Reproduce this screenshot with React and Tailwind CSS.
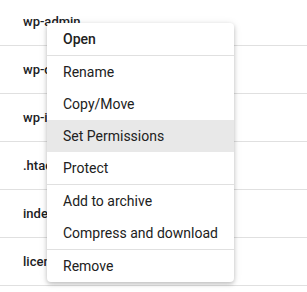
import * as React from "react";

const files = ["wp-admin", "wp-content", "wp-includes", ".htaccess", "index.php", "license.txt"];

const groups = [
  [{ label: "Open", bold: true }],
  [{ label: "Rename" }, { label: "Copy/Move" }, { label: "Set Permissions", active: true }, { label: "Protect" }],
  [{ label: "Add to archive" }, { label: "Compress and download" }],
  [{ label: "Remove" }],
];

export default function App() {
  return (
    <div className="relative w-[307px] h-[292px] overflow-hidden bg-white font-['Roboto',sans-serif]">
      {/* File list */}
      <div className="-mt-[2px]">
        {files.map((name) => (
          <div key={name} className="h-12 flex items-center pl-[23px] border-b border-[#e0e0e0] text-[13px] font-medium text-[#202124]">
            {name}
          </div>
        ))}
      </div>

      {/* Context menu */}
      <div className="absolute left-[47px] top-[23px] w-[187px] bg-white rounded-[4px] shadow-[0_2px_4px_rgba(0,0,0,0.2),0_1px_8px_rgba(0,0,0,0.1)] overflow-hidden">
        {groups.map((group, gi) => (
          <div key={gi} className={gi > 0 ? "border-t border-[#e0e0e0]" : ""}>
            {group.map((item) => (
              <div
                key={item.label}
                className={`h-8 flex items-center pl-4 text-[14px] text-[#212121] ${item.bold ? "font-medium" : ""} ${item.active ? "bg-[#e8e8e8]" : ""}`}
              >
                {item.label}
              </div>
            ))}
          </div>
        ))}
      </div>
    </div>
  );
}
